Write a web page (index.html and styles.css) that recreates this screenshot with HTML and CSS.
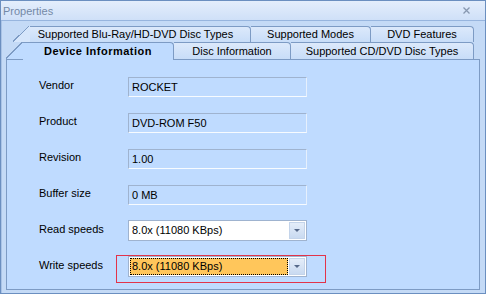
FILE: index.html
```html
<!DOCTYPE html>
<html>
<head>
    <meta charset="UTF-8">
    <link rel="stylesheet" href="styles.css">
</head>
<body>
    <div class="window">
        <div class="titlebar">
            <span class="title">Properties</span>
            <svg class="close" width="7" height="7" viewBox="0 0 7 7">
                <path d="M0.5 0.5 L6.5 6.5 M6.5 0.5 L0.5 6.5" stroke="#8798b0" stroke-width="1.3" fill="none"/>
            </svg>
        </div>
        <div class="client">
            <div class="tabs">
                <div class="tab-row back">
                    <span class="slant"></span>
                    <div class="tab t-blu">Supported Blu-Ray/HD-DVD Disc Types</div>
                    <div class="tab t-modes">Supported Modes</div>
                    <div class="tab t-dvd">DVD Features</div>
                </div>
                <div class="tab-row front">
                    <span class="slant active"></span>
                    <div class="tab active t-device">Device Information</div>
                    <div class="tab t-disc">Disc Information</div>
                    <div class="tab t-cd">Supported CD/DVD Disc Types</div>
                </div>
            </div>
            <div class="panel">
                <div class="label">Vendor</div>
                <div class="textbox">ROCKET</div>

                <div class="label">Product</div>
                <div class="textbox">DVD-ROM F50</div>

                <div class="label">Revision</div>
                <div class="textbox">1.00</div>

                <div class="label">Buffer size</div>
                <div class="textbox">0 MB</div>

                <div class="label">Read speeds</div>
                <div class="combo">
                    <div class="combo-text">8.0x (11080 KBps)</div>
                    <div class="combo-btn"><span class="arrow"></span></div>
                </div>

                <div class="label">Write speeds</div>
                <div class="combo focused marked">
                    <div class="combo-text">8.0x (11080 KBps)</div>
                    <div class="combo-btn"><span class="arrow"></span></div>
                </div>
            </div>
        </div>
    </div>
</body>
</html>
```

FILE: styles.css
```css
* {
    margin: 0;
    padding: 0;
    box-sizing: border-box;
}

body {
    width: 486px;
    height: 294px;
    font-family: "Liberation Sans", Arial, sans-serif;
    font-size: 11px;
    color: #000;
    background: #c4daf6;
}

.window {
    width: 486px;
    height: 294px;
    border: 1px solid #6b8fc0;
    display: flex;
    flex-direction: column;
    background: #c4daf6;
}

.titlebar {
    height: 20px;
    flex: none;
    display: flex;
    align-items: center;
    justify-content: space-between;
    padding: 0 15px 0 2px;
    background: linear-gradient(#e4eefc, #cfe0f8);
    border-bottom: 1px solid #97b5de;
    color: #7489a6;
}

.close {
    display: block;
}

.client {
    flex: 1;
    display: flex;
    flex-direction: column;
    padding: 0 5px 3px 4px;
    border-left: 1px solid #a9c3e6;
}

/* tabs */

.tabs {
    height: 38px;
    flex: none;
    padding-top: 5px;
    display: flex;
    flex-direction: column;
}

.tab-row {
    display: flex;
}

.tab-row.back {
    height: 16px;
    margin-left: 7px;
}

.tab-row.front {
    height: 17px;
}

.slant {
    width: 17px;
    flex: none;
    background: linear-gradient(to bottom right, transparent calc(50% - 1px), #7d9bc4 calc(50% - 1px), #7d9bc4 50%, #d6e6fb 50%);
}

.slant.active {
    background: linear-gradient(to bottom right, transparent calc(50% - 1px), #7d9bc4 calc(50% - 1px), #7d9bc4 50%, #bfdbff 50%);
}

.tab {
    flex: none;
    border-top: 1px solid #7d9bc4;
    border-right: 1px solid #7d9bc4;
    border-top-right-radius: 4px;
    background: linear-gradient(#dce9fb, #c8ddf8);
    text-align: center;
    white-space: nowrap;
}

.back .tab {
    line-height: 14px;
}

.front .tab {
    line-height: 16px;
}

.tab.active {
    height: 18px;
    margin-bottom: -1px;
    z-index: 1;
    background: #bfdbff;
    font-weight: bold;
    letter-spacing: 0.5px;
}

.t-blu { width: 221px; padding-right: 9px; }
.t-modes { width: 120px; }
.t-dvd { width: 103px; }
.t-device { width: 151px; }
.t-disc { width: 117px; }
.t-cd { width: 183px; }

/* panel */

.panel {
    flex: 1;
    border: 1px solid #7d9bc4;
    background: #bfdbff;
    padding: 17px 0 0 32px;
    display: grid;
    grid-template-columns: 89px 179px;
    grid-auto-rows: 20px;
    row-gap: 16px;
    align-content: start;
}

.label {
    line-height: 16px;
}

.textbox {
    height: 20px;
    border: 1px solid;
    border-color: #9fb3cf #e6f0fd #f7fbff #9fb3cf;
    padding-left: 3px;
    line-height: 18px;
}

.combo {
    position: relative;
    height: 21px;
    margin-top: -1px;
    border: 1px solid #9fb3cf;
    background: #fff;
    display: flex;
    padding: 1px;
}

.combo-text {
    flex: 1;
    padding-left: 2px;
    line-height: 17px;
}

.combo.focused .combo-text {
    background: #ffc65b;
    outline: 1px dotted #000;
    outline-offset: -1px;
    margin-right: 1px;
}

.combo-btn {
    width: 16px;
    border: 1px solid #c4d4ea;
    background: linear-gradient(#e4edf9, #c9daf1);
    display: flex;
    align-items: center;
    justify-content: center;
}

.arrow {
    width: 0;
    height: 0;
    border-left: 3px solid transparent;
    border-right: 3px solid transparent;
    border-top: 3px solid #56698a;
}

.combo.marked::after {
    content: "";
    position: absolute;
    left: -13px;
    top: -2px;
    right: -20px;
    bottom: -7px;
    border: 1px solid #e2334a;
}
```
